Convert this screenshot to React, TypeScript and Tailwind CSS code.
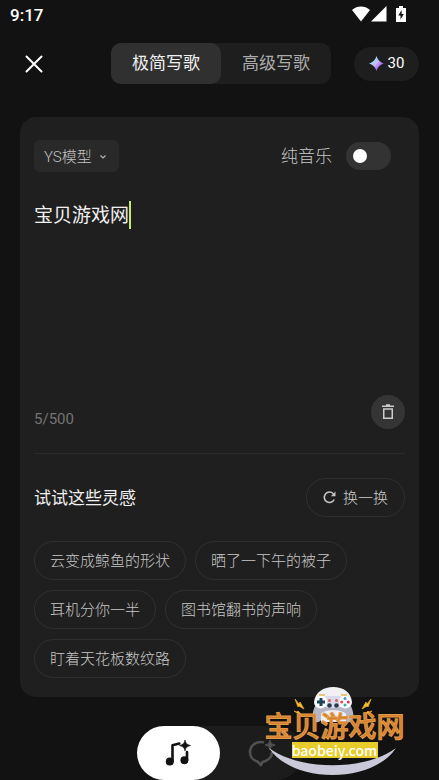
import { useState } from 'react';

const ideas = ['云变成鲸鱼的形状', '晒了一下午的被子', '耳机分你一半', '图书馆翻书的声响', '盯着天花板数纹路'];

function StatusBar() {
  return (
    <div className="flex h-8 items-center justify-between pl-[10px] pr-8 text-[17px] font-medium text-white">
      <span>9:17</span>
      <div className="flex items-center pb-1">
        <svg width="20" height="16" viewBox="0 0 20 16" fill="#fff" aria-hidden="true">
          <path d="M1 4C6.500-.6 13.500-.6 19 4L10 15.500Z" />
        </svg>
        <svg width="16" height="16" viewBox="0 0 16 16" fill="#fff" aria-hidden="true">
          <path d="M15.500 0V15.500H0Z" />
        </svg>
        <svg className="ml-2" width="12" height="16" viewBox="0 0 12 16" aria-hidden="true">
          <path d="M4 0h4v2h3v14H1V2h3Z" fill="#fff" />
          <path d="M6.600 4L3.300 9.500H5.500V13.500L8.800 8H6.600Z" fill="#121212" />
        </svg>
      </div>
    </div>
  );
}

function Header() {
  const [mode, setMode] = useState(0);
  return (
    <header className="mt-[11px] flex h-[41px] items-center justify-between px-5">
      <button type="button" aria-label="关闭" className="flex size-7 items-center justify-center">
        <svg width="18" height="18" viewBox="0 0 18 18" stroke="#fff" strokeWidth="2" strokeLinecap="round" aria-hidden="true">
          <path d="M1.500 1.500L16.500 16.500M16.500 1.500L1.500 16.500" />
        </svg>
      </button>
      <div className="ml-10 flex h-full rounded-[10px] bg-[#1e1e1e] text-[17px] font-normal">
        {['极简写歌', '高级写歌'].map((label, i) => (
          <button
            key={label}
            type="button"
            onClick={() => setMode(i)}
            className={i === mode ? 'w-[110px] rounded-[10px] bg-[#303030] text-[#f0f0f0]' : 'w-[110px] rounded-[10px] text-[#acacac]'}
          >
            {label}
          </button>
        ))}
      </div>
      <button type="button" className="flex h-[34px] w-[65px] items-center justify-center gap-1 rounded-full bg-[#1e1e1e] text-[15px] font-normal text-white">
        <svg width="15" height="15" viewBox="0 0 15 15" aria-hidden="true">
          <defs>
            <linearGradient id="gem" x1="0" y1="0" x2="1" y2="1">
              <stop offset="0.25" stopColor="#8fe3ee" />
              <stop offset="0.5" stopColor="#c8b4f6" />
              <stop offset="0.75" stopColor="#9a55f0" />
            </linearGradient>
          </defs>
          <path d="M7.500 0C9 4.300 10.700 6 15 7.500C10.700 9 9 10.700 7.500 15C6 10.700 4.300 9 0 7.500C4.300 6 6 4.300 7.500 0Z" fill="url(#gem)" />
        </svg>
        30
      </button>
    </header>
  );
}

function Composer() {
  const [text, setText] = useState('宝贝游戏网');
  return (
    <>
      <div className="flex h-8 items-center justify-between">
        <button type="button" className="flex h-8 w-[85px] items-center gap-2 rounded-md bg-[#292929] pl-[10px] pt-[2px] text-[15px] text-[#c4c4c4]">
          YS模型
          <svg width="6" height="4" viewBox="0 0 6 4" fill="none" stroke="#b4b4b4" strokeWidth="1.200" aria-hidden="true">
            <path d="M0.500 0.500L3 3L5.500 0.500" />
          </svg>
        </button>
        <div className="mr-[14px] flex items-center gap-[14px]">
          <label htmlFor="instrumental" className="pt-[2px] text-[17px] text-[#c8c8c8]">
            纯音乐
          </label>
          <input
            id="instrumental"
            type="checkbox"
            role="switch"
            className="h-7 w-[45px] appearance-none rounded-full bg-[#333333] p-[7px] before:block before:size-[14px] before:rounded-full before:bg-white checked:before:ml-auto"
          />
        </div>
      </div>
      <div className="relative mt-[29px] h-[194px]">
        <textarea
          aria-label="歌曲描述"
          maxLength={500}
          value={text}
          onChange={(e) => setText(e.target.value)}
          className="block size-full resize-none bg-transparent pt-px text-[19px] font-normal leading-7 text-[#f0f0f0] outline-none"
        />
        <span className="absolute left-[95px] top-0 h-7 w-[2px] bg-[#c0ee68]" />
      </div>
      <div className="flex h-[34px] items-center justify-between">
        <span className="mt-[14px] text-[15px] font-normal text-[#747474]">{text.length}/500</span>
        <button type="button" aria-label="清空" className="flex size-[34px] items-center justify-center rounded-full bg-[#353535]">
          <svg width="12" height="16" viewBox="0 0 12 16" fill="none" stroke="#cccccc" strokeWidth="1.500" aria-hidden="true">
            <path d="M0 2.250H12M4 1H8M1.750 5H10.250V14.250H1.750Z" />
          </svg>
        </button>
      </div>
    </>
  );
}

function Ideas() {
  return (
    <section className="mt-6 border-t border-[#2b2b2b] pt-6">
      <div className="flex items-center justify-between">
        <h2 className="pt-[2px] text-[17px] font-normal text-[#f0f0f0]">试试这些灵感</h2>
        <button type="button" className="flex h-[39px] w-[99px] items-center justify-center gap-[7px] rounded-full border border-[#303030] text-[15px] text-[#cccccc]">
          <svg width="13" height="13" viewBox="0 0 13 13" fill="none" aria-hidden="true">
            <path d="M11.200 8.500A5.200 5.200 0 1 1 10.300 2.700" stroke="#c4c4c4" strokeWidth="1.600" />
            <path d="M12.500 0.500V5.200H7.800Z" fill="#c4c4c4" />
          </svg>
          <span className="pt-[2px]">换一换</span>
        </button>
      </div>
      <div className="mt-6 flex flex-wrap gap-x-[9px] gap-y-[10px]">
        {ideas.map((idea) => (
          <button key={idea} type="button" className="h-[39px] rounded-full border border-[#303030] px-[15px] pt-[2px] text-[15px] text-[#c8c8c8]">
            {idea}
          </button>
        ))}
      </div>
    </section>
  );
}

function BottomNav() {
  return (
    <nav className="mx-auto mt-[29px] flex w-[166px] rounded-[27px] bg-[#1c1c1c]">
      <button type="button" aria-label="创作" className="flex h-[54px] w-[83px] items-center justify-center rounded-[27px] bg-white">
        <svg width="26" height="26" viewBox="0 0 26 26" fill="#121212" aria-hidden="true">
          <circle cx="4.800" cy="21.500" r="4" />
          <circle cx="19.400" cy="20.200" r="4" />
          <path d="M7.500 21V5.300L14.300 3.500M22 20V12" fill="none" stroke="#121212" strokeWidth="2.600" strokeLinejoin="round" strokeLinecap="round" />
          <path d="M20 0C20.800 3.500 21.800 4.500 25.500 5.500C21.800 6.500 20.800 7.500 20 11C19.200 7.500 18.200 6.500 14.500 5.500C18.200 4.500 19.200 3.500 20 0Z" stroke="#121212" strokeWidth="0.600" />
        </svg>
      </button>
      <button type="button" aria-label="灵感" className="flex h-[54px] w-[83px] items-center justify-center">
        <svg width="28" height="28" viewBox="0 0 28 28" aria-hidden="true">
          <path d="M16 3.200C8.500 2 3 7 3 13C3 18 6.500 21.500 10.500 22.500L14 26L15.500 23C20.500 22 24.500 18.500 25 14" fill="none" stroke="#505050" strokeWidth="2.600" strokeLinecap="round" strokeLinejoin="round" />
          <path d="M23 1C23.700 4.200 24.800 5.300 28 6C24.800 6.700 23.700 7.800 23 11C22.300 7.800 21.200 6.700 18 6C21.200 5.300 22.300 4.200 23 1Z" fill="#505050" stroke="#505050" />
        </svg>
      </button>
    </nav>
  );
}

function SiteBadge() {
  return (
    <div className="pointer-events-none absolute bottom-0 right-[30px] flex h-[96px] w-[149px] flex-col items-center pt-[30px]">
      <svg className="absolute inset-0" width="149" height="96" viewBox="260 684 149 96" aria-hidden="true">
        <path d="M269 748C300 771 365 771 396 748C372 784 293 784 269 748Z" fill="#c9c9d9" />
        <path d="M316 704C312 712 311 719 316 722C320 724 324 716 327 713H339C342 716 346 724 350 722C355 719 354 712 350 704Z" fill="#b5b7c6" />
        <path d="M321 714C324 709 342 709 346 714V722H321Z" fill="#eeeef4" />
        <path d="M314 702C315 692 324 687 333 687C343 687 351 692 352 702C352 708 345 710 341 707H325C321 710 314 708 314 702Z" fill="#f1f1f3" />
        <path d="M325 696H341L339 708H327Z" fill="#d8dbea" />
        <circle cx="321" cy="702" r="6" fill="#fff" />
        <circle cx="345" cy="702" r="6" fill="#fff" />
        <path d="M319.500 698H322.500V700.500H325V703.500H322.500V706H319.500V703.500H317V700.500H319.500Z" fill="#1d4453" />
        <circle cx="345" cy="698.500" r="1.500" fill="#4497c4" />
        <circle cx="345" cy="705" r="1.500" fill="#38a9a5" />
        <circle cx="341.700" cy="702" r="1.500" fill="#e34b55" />
        <circle cx="348.300" cy="702" r="1.500" fill="#c63b60" />
        <circle cx="329.500" cy="705.500" r="2.300" fill="#273b54" />
        <circle cx="336.500" cy="705.500" r="2.300" fill="#273b54" />
        <circle cx="329.500" cy="700.500" r="1.500" fill="#df5e65" />
        <circle cx="336.500" cy="700.500" r="1.500" fill="#df5e65" />
        <path d="M319 695H325M341 695H347" stroke="#e4b84c" strokeWidth="1.600" />
        <path d="M295 699L299 704L300 702L304 709L299 706L298 707ZM294 711L297 712L298 711L301 714L297 713ZM371 699L367 704L366 702L362 709L367 706L368 707ZM372 711L369 712L368 711L365 714L369 713Z" fill="#f2c22b" stroke="#e9a528" strokeWidth="0.800" />
      </svg>
      <span className="relative whitespace-nowrap text-[28px] font-medium leading-7 text-[#d9802f] [-webkit-text-stroke:1px_#e09a48]">宝贝游戏网</span>
      <span className="relative flex h-4 w-[86px] items-center justify-center bg-[#e8cc2c] font-['Noto_Sans_CJK_SC'] text-[14px] font-medium leading-4 text-white">baobeiy.com</span>
    </div>
  );
}

export default function App() {
  return (
    <div className="relative min-h-screen overflow-hidden bg-[#121212] font-[Roboto,'Noto_Sans_CJK_SC',sans-serif] font-light">
      <StatusBar />
      <Header />
      <main className="mx-5 mt-[33px] rounded-2xl bg-[#1f1f1f] px-[14px] pb-[19px] pt-[23px]">
        <Composer />
        <Ideas />
      </main>
      <BottomNav />
      <SiteBadge />
    </div>
  );
}
